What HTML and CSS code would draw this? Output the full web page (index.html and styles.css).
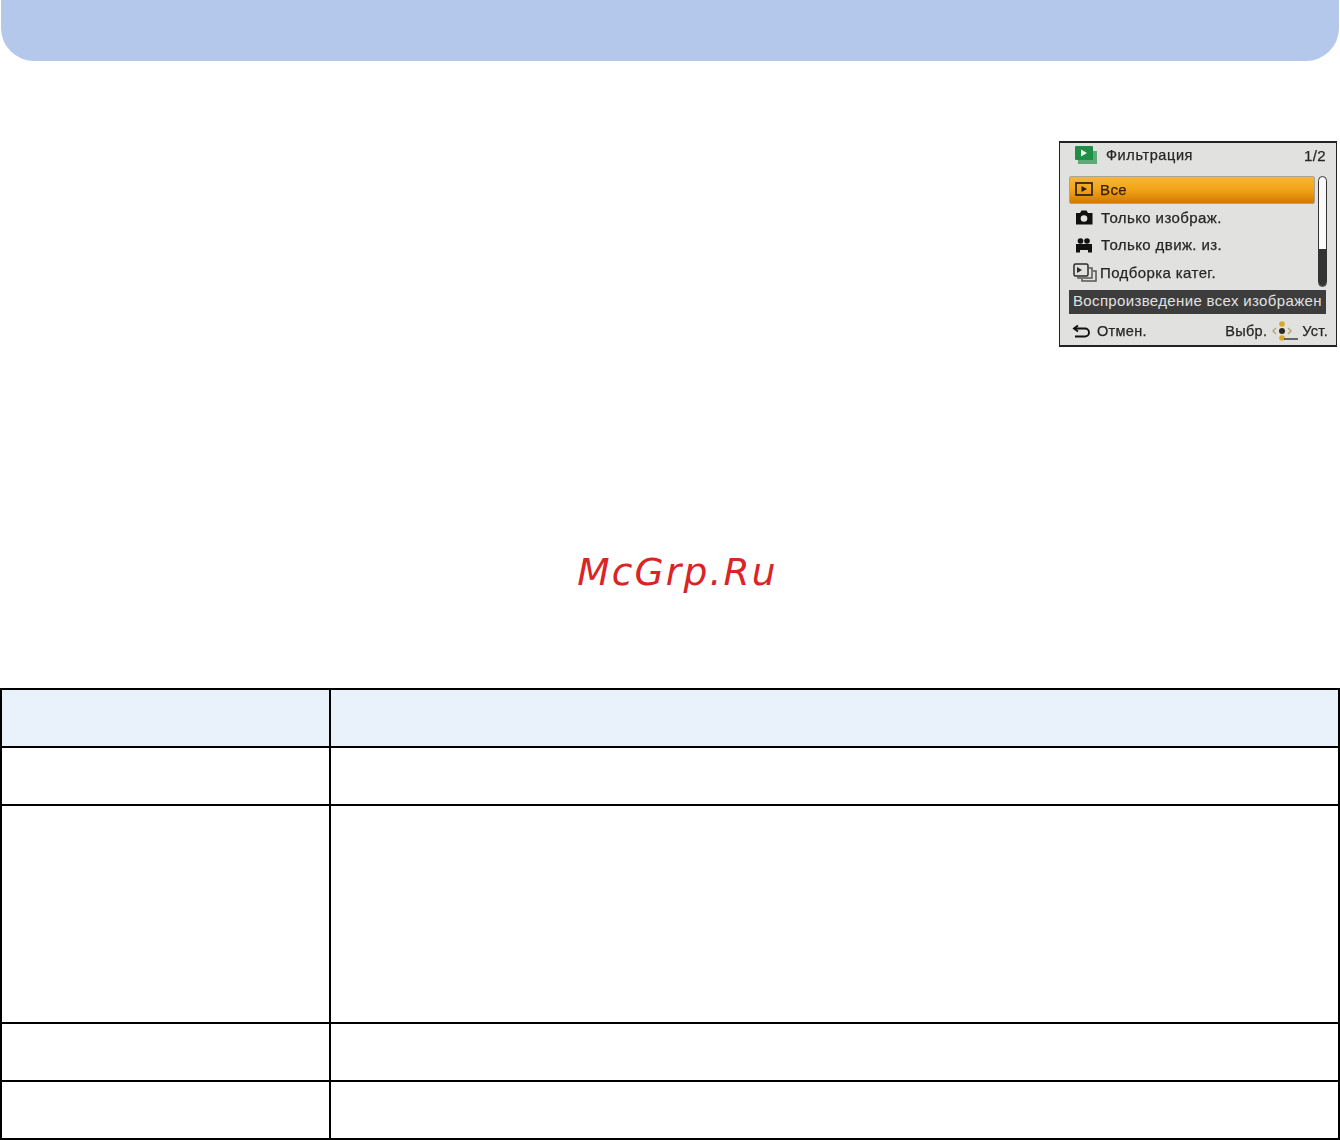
FILE: index.html
```html
<!DOCTYPE html>
<html lang="ru">
<head>
<meta charset="utf-8">
<title>Фильтрация</title>
<link rel="stylesheet" href="styles.css">
</head>
<body>
<header class="banner"></header>
<section class="intro">
  <div class="screen">
    <div class="title-row">
      <svg class="play-icon" width="24" height="18" viewBox="0 0 24 18"><path d="M4 5h19v13H4z" fill="#5fa878"/><rect x="1" y="0" width="18" height="14" rx="1" fill="#1f8f48"/><path d="M7 3.500l6 3.500-6 3.500z" fill="#e8f5e8"/></svg>
      <span class="title">Фильтрация</span>
      <span class="page">1/2</span>
    </div>
    <div class="body">
      <ul class="list">
        <li class="item selected">
          <svg class="icon" width="20" height="16" viewBox="0 0 20 16"><rect x="2" y="2" width="16" height="12" fill="none" stroke="#2a2015" stroke-width="1.700"/><path d="M7.500 5l5.500 3-5.500 3z" fill="#2a2015"/></svg>
          <span>Все</span>
        </li>
        <li class="item">
          <svg class="icon" width="20" height="16" viewBox="0 0 20 16"><path d="M2 4h4l1.500-2.500h5L14 4h4.500v11.500H2z" fill="#111"/><circle cx="10" cy="9.500" r="3.300" fill="#e3e3e0"/></svg>
          <span>Только изображ.</span>
        </li>
        <li class="item">
          <svg class="icon" width="20" height="16" viewBox="0 0 20 16"><circle cx="6.500" cy="4" r="2.800" fill="#111"/><circle cx="13" cy="4" r="2.800" fill="#111"/><path d="M2 7h16v8.500h-4V13H6v2.500H2z" fill="#111"/></svg>
          <span>Только движ. из.</span>
        </li>
        <li class="item tight">
          <svg class="icon" width="26" height="20" viewBox="0 0 26 20"><rect x="2" y="1" width="14" height="12" rx="1.500" fill="none" stroke="#2b2b2b" stroke-width="1.500"/><path d="M5 4l5 3-5 3z" fill="#2b2b2b"/><path d="M17 5h3v10H6v-1M21 8h3v10H10v-2" fill="none" stroke="#555" stroke-width="1.500"/></svg>
          <span>Подборка катег.</span>
        </li>
      </ul>
      <div class="scroll"><span class="thumb"></span></div>
    </div>
    <div class="hint">Воспроизведение всех изображен</div>
    <div class="foot">
      <svg class="back" width="20" height="14" viewBox="0 0 20 14"><path d="M6 1.500L2 4.500l4 3" fill="none" stroke="#111" stroke-width="1.900"/><path d="M2.500 4.500H13a4 4 0 0 1 0 8H3" fill="none" stroke="#111" stroke-width="1.900"/></svg>
      <span>Отмен.</span>
      <span class="spring">Выбр.</span>
      <svg class="pad" width="28" height="24" viewBox="0 0 28 24"><circle cx="12" cy="5" r="2.800" fill="#d8a928"/><circle cx="12" cy="19" r="2.800" fill="#d8a928"/><circle cx="12" cy="12" r="3" fill="#2b2b20"/><path d="M6 9l-3 3 3 3M18 9l3 3-3 3" fill="none" stroke="#b5a878" stroke-width="1.500"/><path d="M14 20h14" stroke="#222" stroke-width="1.300"/></svg>
      <span class="set">Уст.</span>
    </div>
  </div>
</section>
<div class="mark-zone"><span class="mark">McGrp.Ru</span></div>
<table class="data">
  <colgroup><col class="col-a"><col></colgroup>
  <tr class="head"><td></td><td></td></tr>
  <tr class="row"><td></td><td></td></tr>
  <tr class="row tall"><td></td><td></td></tr>
  <tr class="row"><td></td><td></td></tr>
  <tr class="row"><td></td><td></td></tr>
</table>
</body>
</html>
```
FILE: styles.css
```css
* { box-sizing: border-box; }
html, body { margin: 0; padding: 0; background: #fff; }
body { width: 1340px; height: 1140px; overflow: hidden; font-family: "Liberation Sans", Arial, sans-serif; }

.banner {
  height: 61px;
  margin: 0 1px;
  background: #b4c8ec;
  border-radius: 0 0 33px 33px;
}

.intro { display: flex; justify-content: flex-end; padding: 80px 3px 0 0; }

.screen {
  width: 278px;
  height: 206px;
  display: flex;
  flex-direction: column;
  background: #e1e1df;
  border: 1px solid #222;
  border-top-width: 2px;
  border-bottom-width: 2px;
  color: #262626;
  font-size: 15px;
  letter-spacing: .4px;
  overflow: hidden;
}
.screen span { filter: blur(.6px); -webkit-text-stroke: .25px currentColor; }
.hint span, .hint { filter: none; }

.title-row { height: 33px; display: flex; align-items: center; padding: 0 10px 9px 14px; }
.play-icon { flex: none; filter: blur(.5px); }
.title { margin-left: 8px; font-size: 14.500px; letter-spacing: .6px; }
.page { margin-left: auto; font-size: 15px; }

.body { display: flex; height: 114px; padding-left: 9px; }
.list { list-style: none; margin: 0; padding: 0; width: 246px; }
.item { height: 27.500px; display: flex; align-items: center; gap: 7px; padding: 0 0 1px 5px; white-space: nowrap; }
.item .icon { flex: none; filter: blur(.4px); }
.item.selected {
  height: 28px;
  gap: 6px;
  border: 1px solid #a9a597;
  border-radius: 2px;
  background: linear-gradient(#f6b63a 0%, #f2a314 50%, #cf7a04 100%);
  color: #33200a;
  padding: 0 0 2px 4px;
}
.item.tight { gap: 2px; padding: 0 0 0 3px; }
.scroll {
  width: 9px;
  height: 111px;
  margin-left: 3px;
  border: 1.500px solid #333;
  border-radius: 5px;
  background: #fafafa;
  display: flex;
  flex-direction: column;
  justify-content: flex-end;
  overflow: hidden;
}
.scroll .thumb { display: block; height: 37px; background: #333; filter: none; -webkit-text-stroke: 0; }

.hint {
  width: 257px;
  height: 24px;
  margin: 0 0 0 9px;
  background: #3d3d3d;
  color: #e2e2e2;
  line-height: 21px;
  padding-left: 4px;
  white-space: nowrap;
  overflow: hidden;
  font-size: 15px;
  letter-spacing: .35px;
}

.foot { flex: 1; display: flex; align-items: center; padding: 3px 8px 0 12px; font-size: 14.500px; letter-spacing: .3px; }
.back { flex: none; margin-right: 5px; filter: blur(.4px); }
.spring { margin-left: auto; }
.pad { flex: none; margin-left: 3px; filter: blur(.4px); }
.set { margin-left: 4px; }

.mark-zone { height: 341px; padding-top: 207px; text-align: center; }
.mark {
  display: inline-block;
  margin-left: 15px;
  font: oblique 37.500px/1 "DejaVu Sans", sans-serif;
  letter-spacing: 2.200px;
  color: #d92525;
}

.data { width: 1340px; border-collapse: collapse; table-layout: fixed; }
.data td { border: 2px solid #000; padding: 0; }
.col-a { width: 329px; }
.head td { height: 58px; background: #e9f1fb; }
.row td { height: 58px; }
.row.tall td { height: 218px; }
```
